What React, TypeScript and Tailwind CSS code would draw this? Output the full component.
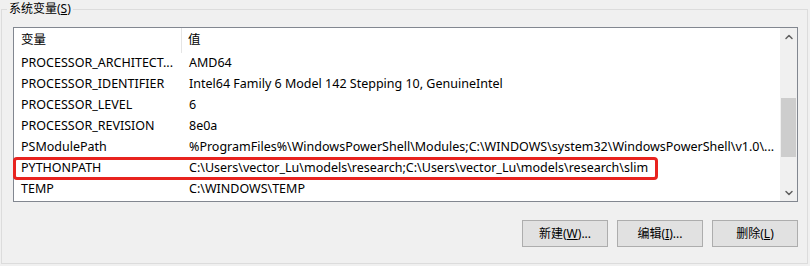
import { ChevronUp, ChevronDown } from 'lucide-react';

const rows = [
  { name: 'PROCESSOR_ARCHITECT...', value: 'AMD64' },
  { name: 'PROCESSOR_IDENTIFIER', value: 'Intel64 Family 6 Model 142 Stepping 10, GenuineIntel' },
  { name: 'PROCESSOR_LEVEL', value: '6' },
  { name: 'PROCESSOR_REVISION', value: '8e0a' },
  { name: 'PSModulePath', value: '%ProgramFiles%\\WindowsPowerShell\\Modules;C:\\WINDOWS\\system32\\WindowsPowerShell\\v1.0\\...' },
  { name: 'PYTHONPATH', value: 'C:\\Users\\vector_Lu\\models\\research;C:\\Users\\vector_Lu\\models\\research\\slim' },
  { name: 'TEMP', value: 'C:\\WINDOWS\\TEMP' },
];

function WinButton({ label, hotkey, suffix }: { label: string; hotkey: string; suffix?: string }) {
  return (
    <button className="w-[86px] h-[27px] bg-[#e1e1e1] border border-[#adadad] text-[12px] text-black flex items-center justify-center">
      {label}(<span className="underline">{hotkey}</span>){suffix}
    </button>
  );
}

export default function App() {
  return (
    <div
      className="w-[810px] h-[266px] bg-[#f0f0f0] pt-[9px] pl-[1px] pr-[2px] pb-[2px] text-black"
      style={{ fontFamily: '"Noto Sans", "Noto Sans CJK SC", sans-serif' }}
    >
      {/* group box */}
      <div className="relative h-[255px] border border-[#dcdcdc] pl-[11px] pr-[9px] pt-[17px]">
        <span className="absolute left-[5px] top-[-9px] px-[2px] bg-[#f0f0f0] text-[12px] leading-[16px]">
          系统变量(<span className="underline">S</span>)
        </span>

        {/* list view */}
        <div className="relative h-[175px] bg-white border border-[#828790] flex">
          <div className="flex-1 min-w-0 text-[12.5px]">
            <div className="flex h-[25px] items-center">
              <div className="w-[168px] pl-[7px] border-r border-[#e5e5e5] h-full flex items-center">变量</div>
              <div className="pl-[6px]">值</div>
            </div>
            {rows.map((r) => (
              <div key={r.name} className="flex h-[21px] items-center whitespace-nowrap">
                <div className="w-[169px] pl-[7px]">{r.name}</div>
                <div className="pl-[6px]">{r.value}</div>
              </div>
            ))}
          </div>

          {/* scrollbar */}
          <div className="w-[17px] bg-[#f0f0f0] flex flex-col">
            <div className="h-[17px] flex items-center justify-center text-[#606060]">
              <ChevronUp size={12} strokeWidth={3} />
            </div>
            <div className="flex-1 flex flex-col">
              <div className="h-[53px]" />
              <div className="h-[59px] mx-[1px] bg-[#cdcdcd]" />
            </div>
            <div className="h-[17px] flex items-center justify-center text-[#606060]">
              <ChevronDown size={12} strokeWidth={3} />
            </div>
          </div>

          {/* red highlight around PYTHONPATH */}
          <div className="absolute left-[-1px] top-[129px] w-[645px] h-[23px] border-[3px] border-[#e8231f] rounded-[4px]" />
        </div>

        <div className="flex justify-end gap-[9px] mt-[18px]">
          <WinButton label="新建" hotkey="W" suffix="..." />
          <WinButton label="编辑" hotkey="I" suffix="..." />
          <WinButton label="删除" hotkey="L" />
        </div>
      </div>
    </div>
  );
}
